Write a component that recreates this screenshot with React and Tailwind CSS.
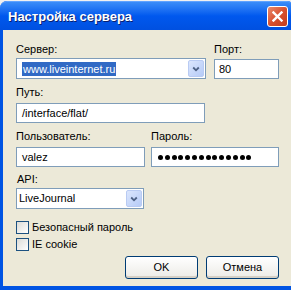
import React from 'react';

const font = { fontFamily: '"Liberation Sans", Arial, sans-serif' };

const DropButton = () => (
  <div className="absolute right-[1px] top-[1px] bottom-[1px] w-[16px] rounded-[2px] border border-[#b9cbf3] bg-gradient-to-br from-[#dbe6fd] to-[#b6cbf7] flex items-center justify-center">
    <svg width="8" height="6" viewBox="0 0 8 6">
      <path d="M1.2 1.5 L4 4.3 L6.8 1.5" fill="none" stroke="#4d6185" strokeWidth="1.8" />
    </svg>
  </div>
);

const Field = ({ className = '', children }) => (
  <div className={`relative h-[20px] border border-[#7f9db9] bg-white flex items-center text-[11px] text-black ${className}`}>
    {children}
  </div>
);

const Label = ({ children, className = '' }) => (
  <div className={`h-[13px] leading-[13px] text-[11px] text-black ${className}`}>{children}</div>
);

const Checkbox = ({ label }) => (
  <div className="flex items-center h-[13px]">
    <div className="w-[13px] h-[13px] border border-[#1c5180] bg-gradient-to-br from-[#dcdcd7] to-white" />
    <span className="ml-[3px] text-[11px] leading-[13px] text-black">{label}</span>
  </div>
);

const XPButton = ({ children }) => (
  <div className="w-[73px] h-[23px] rounded-[3px] border border-[#003c74] bg-gradient-to-b from-white to-[#ecebe6] flex items-center justify-center text-[11px] text-black shadow-[inset_0_-2px_0_#d6d0c5]">
    {children}
  </div>
);

export default function App() {
  return (
    <div className="w-[291px] h-[290px] bg-[#f0f0f0] relative overflow-hidden" style={font}>
      <div className="absolute left-0 top-[1px] w-[294px] h-[289px] rounded-t-[7px] bg-[#0054e3] flex flex-col">
        {/* title bar */}
        <div className="h-[29px] rounded-t-[7px] border-t border-[#5fa2ff] bg-gradient-to-b from-[#3a8cf8] via-[#0058ee] to-[#0050e0] flex items-center px-[8px] relative">
          <span className="text-white font-bold text-[13px] mt-[1px] [text-shadow:1px_1px_0_#0a1f6e]">Настройка сервера</span>
          <div className="absolute left-[267px] top-[4px] w-[21px] h-[21px] rounded-[3px] border border-white bg-gradient-to-br from-[#e98a6d] via-[#d8502f] to-[#c23c1c] flex items-center justify-center">
            <svg width="11" height="11" viewBox="0 0 11 11">
              <path d="M1.5 1.5 L9.5 9.5 M9.5 1.5 L1.5 9.5" stroke="white" strokeWidth="2.4" strokeLinecap="square" />
            </svg>
          </div>
        </div>
        {/* body */}
        <div className="flex-1 ml-[3px] mb-[4px] bg-[#ece9d8] pl-[13px] pt-[13px] flex flex-col">
          <div className="flex">
            <div className="w-[190px]">
              <Label>Сервер:</Label>
              <Field className="mt-[2px] h-[21px] pl-[5px]">
                <span className="bg-[#316ac5] text-white px-[1px] leading-[14px]">www.liveinternet.ru</span>
                <DropButton />
              </Field>
            </div>
            <div className="ml-[8px] w-[65px]">
              <Label>Порт:</Label>
              <Field className="mt-[3px] pl-[4px]">80</Field>
            </div>
          </div>
          <Label className="mt-[7px]">Путь:</Label>
          <Field className="mt-[4px] w-[189px] pl-[5px]">/interface/flat/</Field>
          <div className="flex mt-[7px]">
            <div className="w-[129px]">
              <Label>Пользователь:</Label>
              <Field className="mt-[4px] pl-[5px]">valez</Field>
            </div>
            <div className="ml-[6px] w-[128px]">
              <Label>Пароль:</Label>
              <Field className="mt-[4px] pl-[6px]">
                <div className="flex gap-[1.8px]">
                  {Array.from({ length: 14 }).map((_, i) => (
                    <div key={i} className="w-[5px] h-[5px] rounded-full bg-black" />
                  ))}
                </div>
              </Field>
            </div>
          </div>
          <Label className="mt-[6px] ml-[1px]">API:</Label>
          <Field className="mt-[2px] w-[128px] h-[21px] pl-[2px]">
            LiveJournal
            <DropButton />
          </Field>
          <div className="mt-[12px] flex flex-col gap-[4px]">
            <Checkbox label="Безопасный пароль" />
            <Checkbox label="IE cookie" />
          </div>
          <div className="mt-[5px] flex gap-[8px] ml-[109px]">
            <XPButton>OK</XPButton>
            <XPButton>Отмена</XPButton>
          </div>
        </div>
      </div>
    </div>
  );
}
